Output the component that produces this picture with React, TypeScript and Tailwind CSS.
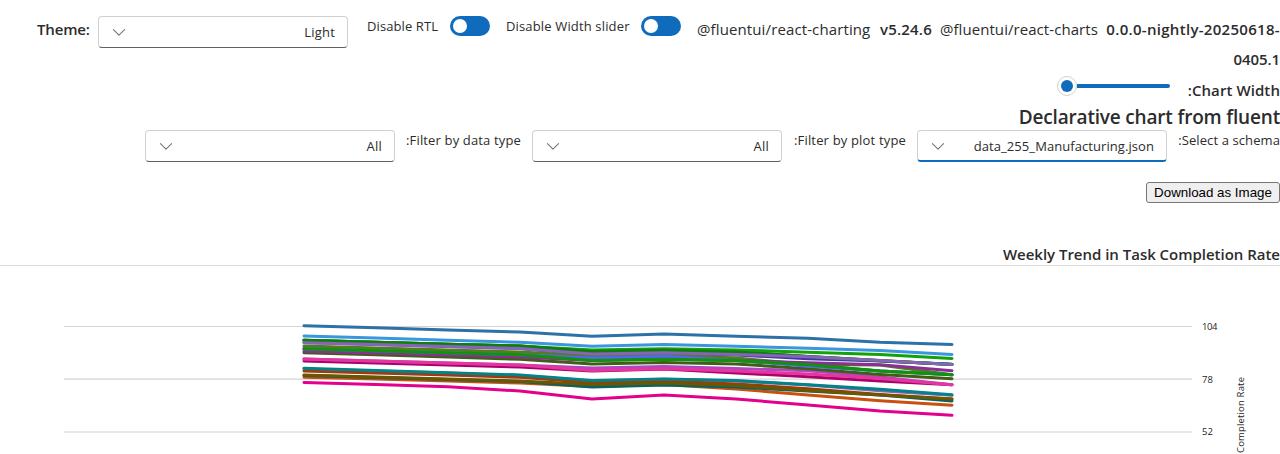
import React from 'react';

function Chevron() {
  return (
    <svg width="20" height="20" viewBox="0 0 20 20" fill="none" className="shrink-0">
      <path d="M4.4 7.7 L10 13.2 L15.6 7.7" stroke="#767676" strokeWidth="1.1" strokeLinecap="round" strokeLinejoin="round" />
    </svg>
  );
}

function Dropdown({ label, textClass, active = false }: { label: string; textClass: string; active?: boolean }) {
  return (
    <div
      className={
        active
          ? 'flex h-8 w-[250px] shrink-0 items-center justify-between rounded border border-b-2 border-[#d1d1d1] border-b-[#0f6cbd] pl-[10px] pr-3'
          : 'flex h-8 w-[250px] shrink-0 items-center justify-between rounded border border-[#d1d1d1] border-b-[#616161] pl-[10px] pr-3'
      }
    >
      <Chevron />
      <span className={`whitespace-nowrap text-[13px] leading-5 ${textClass}`}>{label}</span>
    </div>
  );
}

function Toggle() {
  return (
    <div className="flex h-5 w-10 shrink-0 items-center rounded-full bg-[#0f6cbd] pl-[3px]">
      <div className="h-[14px] w-[14px] rounded-full bg-white" />
    </div>
  );
}

const xs = [304, 376, 448, 520, 592, 664, 736, 808, 880, 952];

const series: { color: string; ys: number[] }[] = [
  { color: '#e3008c', ys: [382.5, 384.6, 386.7, 391, 399, 395, 399, 405, 411, 415.3] },
  { color: '#ca5010', ys: [377.3, 379, 381, 383, 386.5, 384.5, 389, 395, 400.8, 405.2] },
  { color: '#026467', ys: [375.5, 377.5, 379.5, 381.5, 387, 385, 387, 391, 395, 401] },
  { color: '#8764b8', ys: [369, 371, 373, 375.5, 381, 379.3, 381, 385, 390.8, 395.3] },
  { color: '#a0390f', ys: [371, 373, 375, 377.3, 382.5, 381, 384, 388.7, 394.5, 399] },
  { color: '#6b5700', ys: [375, 377, 379, 381, 384.5, 383, 385.5, 390.5, 395, 399] },
  { color: '#038387', ys: [368.3, 370.5, 372.7, 375, 380.5, 379, 380.5, 384.7, 389.2, 394.8] },
  { color: '#ad006a', ys: [361, 363, 365, 367, 371, 369, 373, 376.7, 381, 384.7] },
  { color: '#b146c2', ys: [359, 361, 363, 365, 368, 366.5, 368.5, 370.8, 377, 384.7] },
  { color: '#e3379f', ys: [359, 361, 363, 365, 370.5, 368.7, 371, 374, 378.5, 384.7] },
  { color: '#3b3aa5', ys: [342.5, 344.5, 346.5, 348.5, 355, 353.5, 355, 358.8, 361, 364.3] },
  { color: '#567c1b', ys: [346, 348, 350, 352, 356, 355, 358, 364.5, 365, 374.7] },
  { color: '#405e14', ys: [352.8, 354.8, 357, 359.3, 364, 362.5, 364, 368.8, 374.5, 378.7] },
  { color: '#8a2f96', ys: [351.3, 353, 355, 357, 360.5, 359, 360.5, 362.7, 364.7, 370.7] },
  { color: '#11910d', ys: [348.7, 350.7, 352.7, 354.7, 360, 359, 360.5, 364.7, 371, 374.8] },
  { color: '#4f6bed', ys: [348.7, 350.7, 352.7, 354.7, 358, 356.3, 360.5, 366.3, 371, 374.7] },
  { color: '#11910d', ys: [348.7, 350.7, 352.7, 354.7, 360.4, 359.2, 360.5, 364.7, 371, 374.8] },
  { color: '#0b6a0b', ys: [340.2, 342.3, 344.3, 346, 352, 350.7, 352, 356.5, 360.7, 364.5] },
  { color: '#13a10e', ys: [340.2, 342.3, 344.3, 346, 350, 348.8, 350, 352.2, 354.4, 358.5] },
  { color: '#107c10', ys: [340.2, 342.3, 344.3, 346, 351.5, 350.3, 352, 356.5, 360.5, 364.5] },
  { color: '#8764b8', ys: [342.7, 344.5, 346.6, 348.5, 354, 352.8, 354.5, 356.7, 360.4, 364.4] },
  { color: '#3a96dd', ys: [336, 338, 340.2, 342.3, 346.2, 344.4, 346.2, 348.2, 350.4, 354.5] },
  { color: '#2c72a8', ys: [325.7, 327.8, 330, 332, 336.2, 334, 336.2, 338.3, 342.3, 344.4] },
];

function Chart() {
  return (
    <svg width="1280" height="188" viewBox="0 266 1280 188" className="block">
      <g stroke="#d4d4d4" strokeWidth="1" shapeRendering="crispEdges">
        <line x1="64" x2="1192" y1="326.5" y2="326.5" />
      </g>
      <g stroke="#e0e0e0" strokeWidth="1.7">
        <line x1="64" x2="1192" y1="379.2" y2="379.2" />
        <line x1="64" x2="1192" y1="432" y2="432" />
      </g>
      <g fill="none" strokeWidth="3" strokeLinecap="round" strokeLinejoin="round">
        {series.map((s, i) => (
          <polyline key={i} stroke={s.color} points={s.ys.map((y, j) => `${xs[j]},${y}`).join(' ')} />
        ))}
      </g>
      <g fill="#242424" fontSize="9.5" fontFamily="Open Sans, sans-serif" fontWeight="500">
        <text x="1202" y="330" textLength="15.5">104</text>
        <text x="1202" y="382.5">78</text>
        <text x="1202" y="435">52</text>
        <text x="0" y="0" fontSize="9.5" fontWeight="500" textLength="76" transform="translate(1244 453) rotate(-90)">Completion Rate</text>
      </g>
    </svg>
  );
}

export default function App() {
  return (
    <div className="h-[454px] w-[1280px] overflow-hidden bg-white font-['Open_Sans','Noto_Sans',sans-serif] text-[#2c2c2c]">
      <div className="flex h-[75px] items-start">
        <span className="ml-[37px] mt-[18px] w-[61px] shrink-0 whitespace-nowrap text-[15px] font-semibold leading-[22px] tracking-[-0.15px]">Theme:</span>
        <div className="pt-4">
          <Dropdown label="Light" textClass="tracking-[0.2px]" />
        </div>
        <span className="ml-[19px] mt-4 w-[83px] shrink-0 whitespace-nowrap text-[13px] leading-5 tracking-[0.1px]">Disable RTL</span>
        <div className="pt-4"><Toggle /></div>
        <span className="ml-4 mt-4 w-[135px] shrink-0 whitespace-nowrap text-[13px] leading-5 tracking-[0.15px]">Disable Width slider</span>
        <div className="pt-4"><Toggle /></div>
        <div className="ml-4 flex flex-1 items-start pt-[14px] text-[15px] leading-[30px]">
          <span className="w-[183px] shrink-0 whitespace-nowrap tracking-[0.12px]">@fluentui/react-charting</span>
          <span className="w-[60px] shrink-0 whitespace-nowrap font-semibold tracking-[0.2px]">v5.24.6</span>
          <span className="w-[160px] shrink-0 whitespace-nowrap tracking-[0.06px]">@fluentui/react-charts</span>
          <span className="flex-1 text-right font-semibold">
            <span className="block whitespace-nowrap tracking-[0.3px]">0.0.0-nightly-20250618-</span>
            <span className="block tracking-[-0.1px]">0405.1</span>
          </span>
        </div>
      </div>
      <div className="flex h-8 items-start justify-end">
        <div className="flex h-[22px] w-[113px] items-center">
          <div className="flex h-5 w-5 shrink-0 items-center justify-center rounded-full border border-[#d1d1d1] bg-white">
            <div className="h-3 w-3 rounded-full bg-[#0f6cbd]" />
          </div>
          <div className="h-1 flex-1 rounded-r-sm bg-[#0f6cbd]" />
        </div>
        <span className="mt-1 w-[110px] whitespace-nowrap text-right text-[15px] font-semibold leading-[22px] tracking-[0.08px]">:Chart Width</span>
      </div>
      <h2 className="-mt-[3px] h-[26px] whitespace-nowrap text-right text-[19px] font-semibold leading-[26px] tracking-[-0.18px]">Declarative chart from fluent</h2>
      <div className="flex h-[52px] justify-end whitespace-nowrap text-[13px] leading-5">
        <Dropdown label="All" textClass="tracking-[0.2px]" />
        <span className="w-[137px] shrink-0 pr-[11px] text-right tracking-[0.15px]">:Filter by data type</span>
        <Dropdown label="All" textClass="tracking-[0.2px]" />
        <span className="w-[135px] shrink-0 pr-[11px] text-right tracking-[0.17px]">:Filter by plot type</span>
        <Dropdown label="data_255_Manufacturing.json" textClass="tracking-[0.07px]" active />
        <span className="w-[113px] shrink-0 text-right tracking-[0.1px]">:Select a schema</span>
      </div>
      <div className="flex h-[61px] items-start justify-end">
        <button className="h-[21px] w-[134px] whitespace-nowrap rounded-[3px] border border-[#767676] bg-[#efefef] font-['Liberation_Sans',sans-serif] text-[13.333px] leading-[19px] text-black">Download as Image</button>
      </div>
      <div className="h-[23px] whitespace-nowrap border-b border-[#d9d9d9] text-right text-[15px] font-semibold leading-[22px] tracking-[-0.02px]">Weekly Trend in Task Completion Rate</div>
      <Chart />
    </div>
  );
}
